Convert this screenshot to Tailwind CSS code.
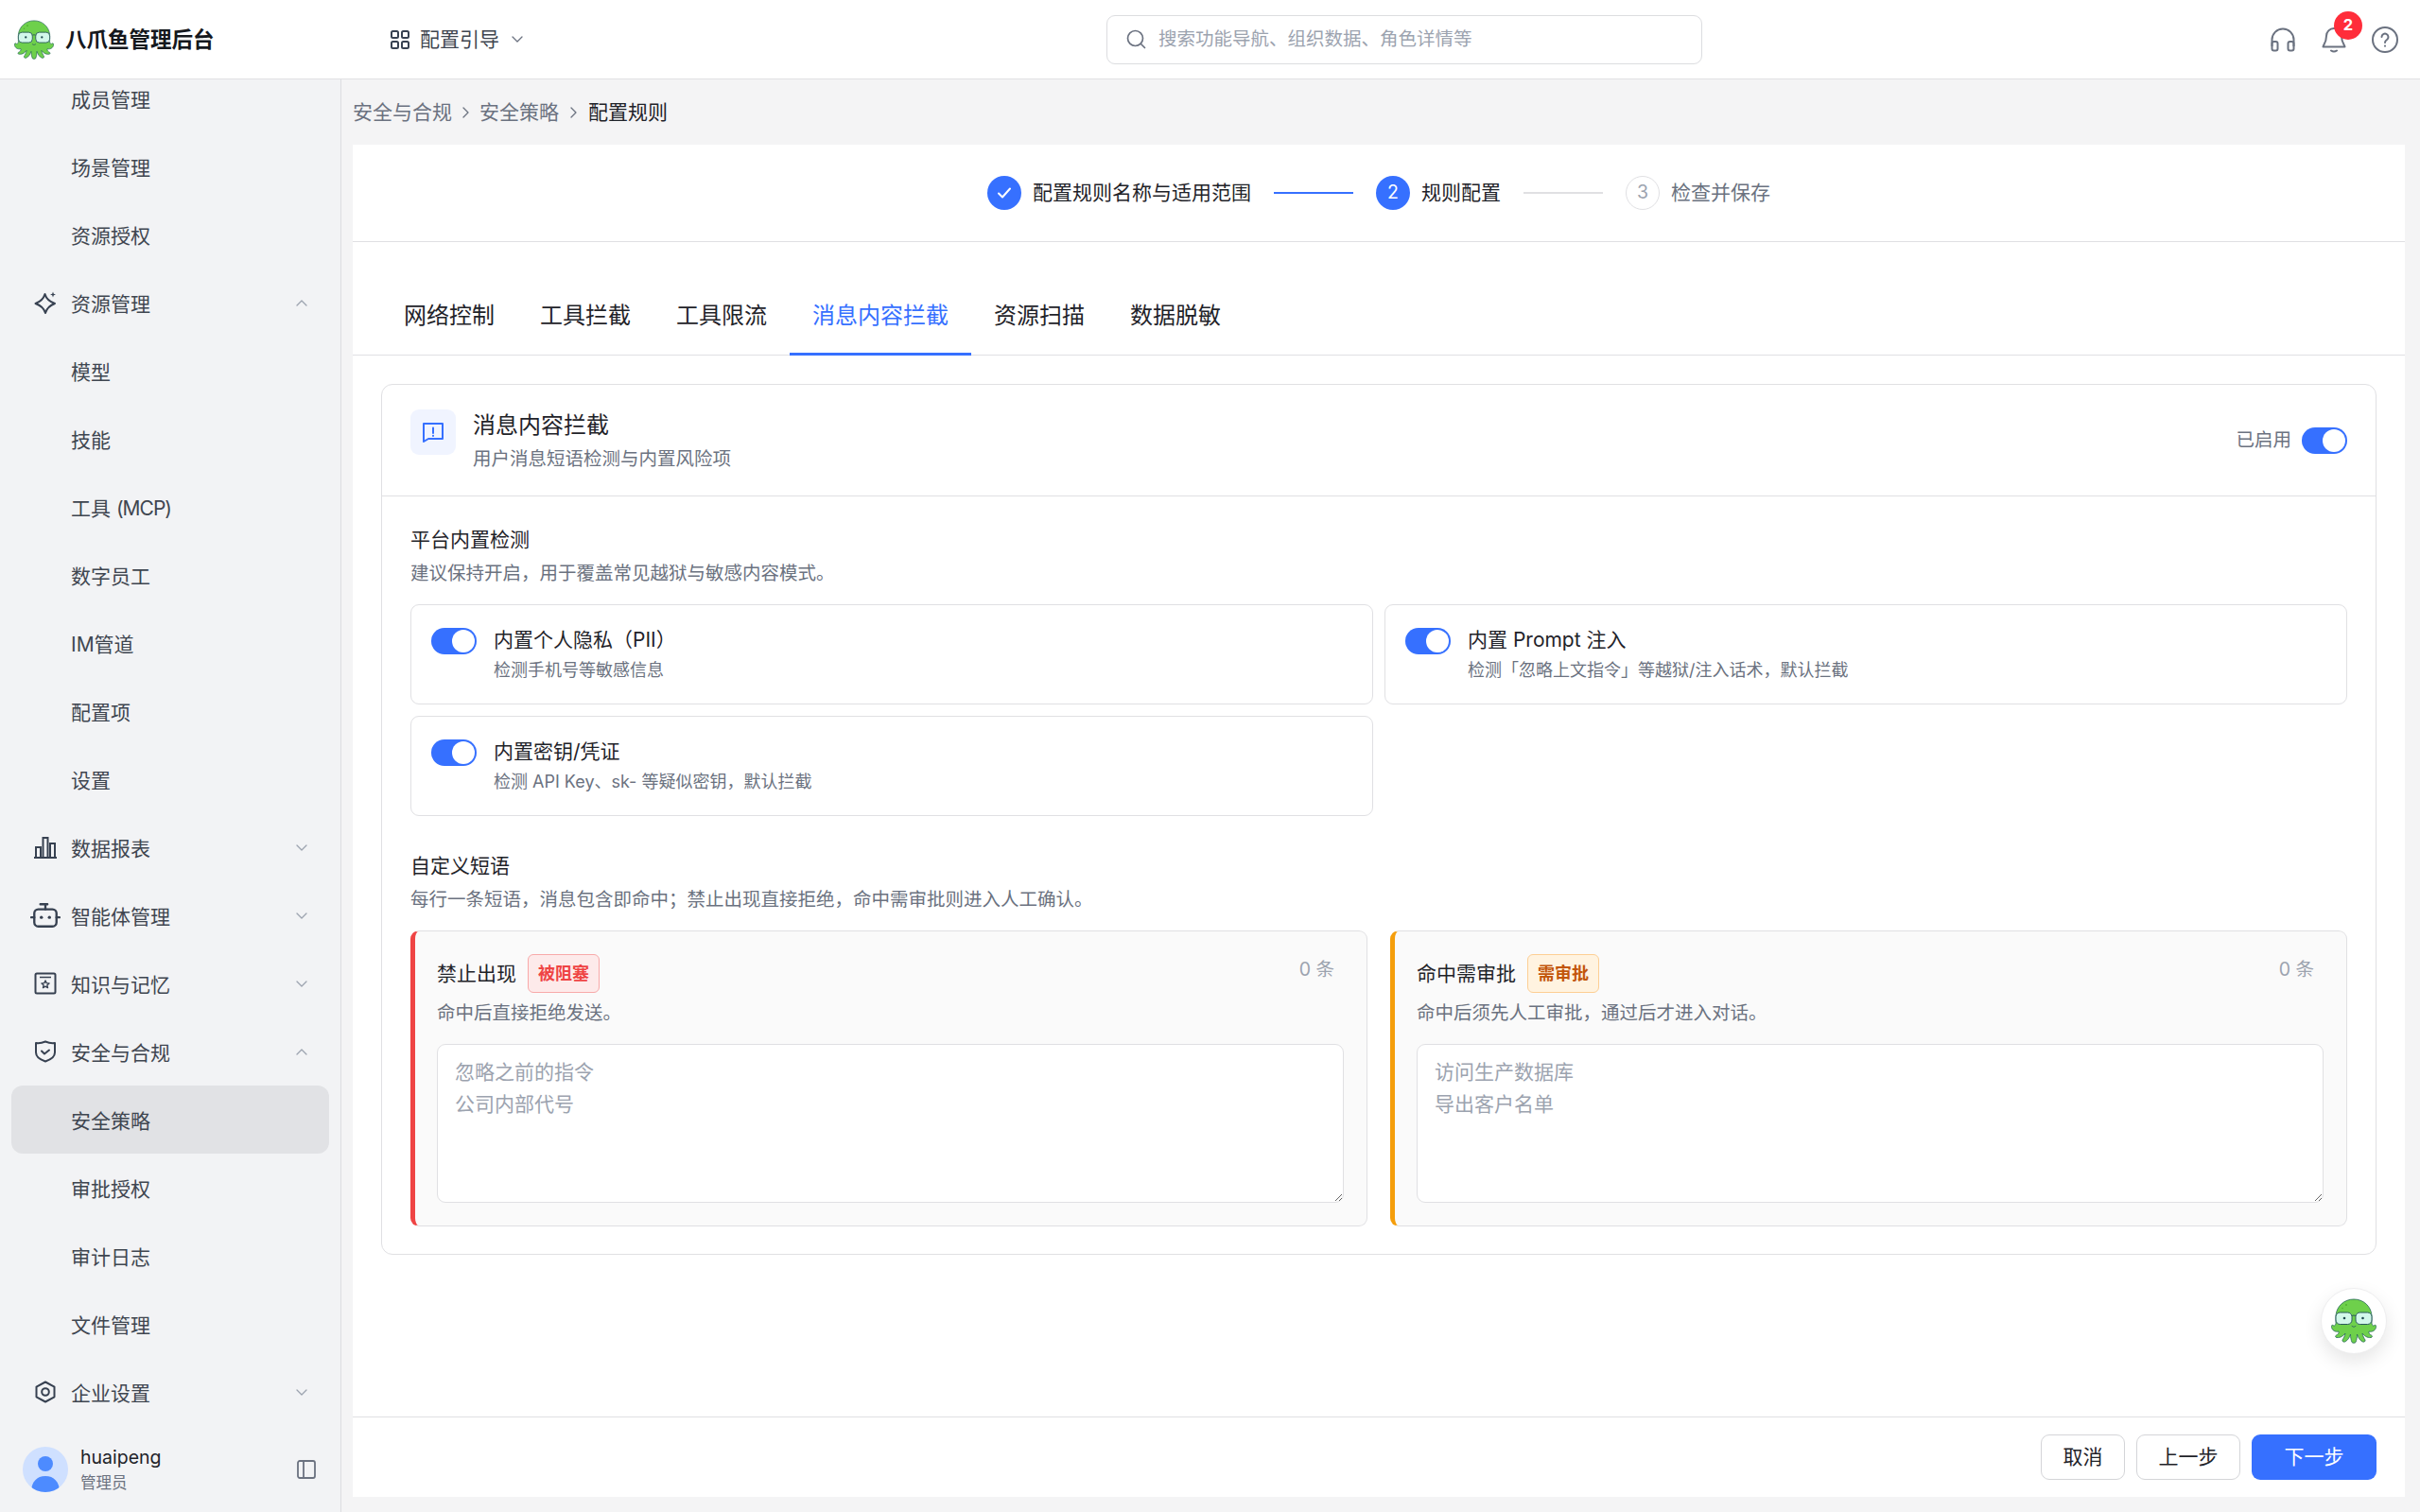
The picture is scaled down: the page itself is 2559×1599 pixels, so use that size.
<!DOCTYPE html>
<html lang="zh-CN">
<head>
    <meta charset="UTF-8">
    <title>八爪鱼管理后台</title>
    <script src="https://cdn.jsdelivr.net/npm/@tailwindcss/browser@4"></script>
</head>
<body class="h-screen overflow-hidden flex flex-col bg-[#f4f4f5] text-[#1f2329] text-[21px] font-['Inter','Noto_Sans_CJK_SC',sans-serif]">

    <!-- shared octopus logo -->
    <svg class="hidden">
        <symbol id="octopus" viewBox="0 0 48 48">
            <path d="M24 1C34 1 42 8 43 18L43 27C43.500 29 45 29.500 46 28.500C47.200 27.800 47.800 29 47.500 30.500C47 34 43.500 36 40 35C39.500 37 41 38.500 42.500 39C44 39.800 43.500 41.500 42 41.500C38 42 35 39.500 33 37C33.500 40 35 42.500 36 44C36.500 45.500 35 46.500 33.500 46C30 44.500 28.500 41 27.500 38C27.500 41 27 44 26 46.500C25.200 47.500 22.800 47.500 22 46.500C21 44 20.500 41 20.500 38C19.500 41 18 44.500 14.500 46C13 46.500 11.500 45.500 12 44C13 42.500 14.500 40 15 37C13 39.500 10 42 6 41.500C4.500 41.500 4 39.800 5.500 39C7 38.500 8.500 37 8 35C4.500 36 1 34 .5 30.500C.2 29 .8 27.800 2 28.500C3 29.500 4.500 29 5 27L5 18C6 8 14 1 24 1Z" fill="#6ed04b" stroke="#2a6a5a" stroke-width=".8" stroke-linejoin="round"/>
            <rect x="5" y="15" width="17" height="12.500" rx="4.500" fill="#d2f8ea" stroke="#2a5a5c" stroke-width="1"/>
            <rect x="26" y="15" width="17" height="12.500" rx="4.500" fill="#d2f8ea" stroke="#2a5a5c" stroke-width="1"/>
            <path d="M22 18.500Q24 17.500 26 18.500" fill="none" stroke="#2a5a5c" stroke-width="1"/>
            <circle cx="14" cy="21" r="1.300" fill="#1f4a4f"/>
            <circle cx="33.500" cy="21" r="1.300" fill="#1f4a4f"/>
            <path d="M22 29.500Q24 31.500 26 29.500" fill="none" stroke="#2a5a5c" stroke-width=".8" stroke-linecap="round"/>
            <circle cx="16" cy="7" r="1" fill="#4fb02f"/>
            <circle cx="12" cy="10.500" r=".8" fill="#4fb02f"/>
        </symbol>
        <symbol id="chev-down" viewBox="0 0 12 7"><path d="M1 1l5 5 5-5" fill="none" stroke="currentColor" stroke-width="1.300" stroke-linecap="round" stroke-linejoin="round"/></symbol>
        <symbol id="chev-up" viewBox="0 0 12 7"><path d="M1 6l5-5 5 5" fill="none" stroke="currentColor" stroke-width="1.300" stroke-linecap="round" stroke-linejoin="round"/></symbol>
        <symbol id="chev-right" viewBox="0 0 7 12"><path d="M1 1l5 5-5 5" fill="none" stroke="currentColor" stroke-width="1.300" stroke-linecap="round" stroke-linejoin="round"/></symbol>
    </svg>

    <!-- Top bar -->
    <header class="h-[84px] flex-none flex items-center bg-white border-b border-[#e0e0e3]">
        <div class="w-[413px] flex-none flex items-center pl-[15px] gap-3">
            <svg class="w-[42px] h-[42px]"><use href="#octopus"/></svg>
            <span class="text-[22.5px] font-bold text-[#15181d]">八爪鱼管理后台</span>
        </div>
        <div class="w-[757px] flex-none flex items-center text-[#3f4650]">
            <svg class="w-[20px] h-[20px] mr-[11px]" viewBox="0 0 20 20" fill="none" stroke="#374151" stroke-width="2"><rect x="1" y="1" width="7" height="7" rx="1.500"/><rect x="12" y="1" width="7" height="7" rx="1.500"/><rect x="1" y="12" width="7" height="7" rx="1.500"/><rect x="12" y="12" width="7" height="7" rx="1.500"/></svg>
            <span class="leading-[32px]">配置引导</span>
            <svg class="w-[12px] h-[7px] ml-[13px] text-[#6b7280]"><use href="#chev-down"/></svg>
        </div>
        <div class="w-[630px] h-[52px] flex-none flex items-center gap-3 px-[19px] bg-white border border-[#dcdde0] rounded-[9px]">
            <svg class="w-[23px] h-[23px]" viewBox="0 0 23 23" fill="none" stroke="#6b7280" stroke-width="1.700" stroke-linecap="round"><circle cx="10.500" cy="10.500" r="8"/><path d="M16.500 16.500l4 4"/></svg>
            <span class="text-[19.5px] text-[#9ca3af]">搜索功能导航、组织数据、角色详情等</span>
        </div>
        <div class="ml-auto pr-[10px] flex items-center text-[#6b7280]">
            <div class="w-[54px] flex justify-center">
                <svg class="w-[26px] h-[26px]" viewBox="0 0 26 26" fill="none" stroke="currentColor" stroke-width="2" stroke-linejoin="round"><path d="M1.500 20v-7a11.500 11.500 0 0 1 23 0v7"/><rect x="1.500" y="15" width="6" height="9.500" rx="2"/><rect x="18.500" y="15" width="6" height="9.500" rx="2"/></svg>
            </div>
            <div class="relative w-[54px] flex justify-center">
                <svg class="w-[26px] h-[28px]" viewBox="0 0 26 28" fill="none" stroke="currentColor" stroke-width="2" stroke-linecap="round" stroke-linejoin="round"><path d="M13 2a8 8 0 0 0-8 8c0 7-3.500 10-3.500 11.500h23C24.500 20 21 17 21 10a8 8 0 0 0-8-8z"/><path d="M10 25.500q3 2 6 0"/></svg>
                <span class="absolute left-[27px] top-[-16px] w-[30px] h-[30px] rounded-full bg-[#ff2d3a] text-white text-[16.5px] font-bold flex items-center justify-center">2</span>
            </div>
            <div class="w-[54px] flex justify-center">
                <svg class="w-[28px] h-[28px]" viewBox="0 0 28 28" fill="none" stroke="currentColor" stroke-width="2" stroke-linecap="round"><circle cx="14" cy="14" r="13"/><path d="M10.500 11a3.500 3.500 0 1 1 5.500 3c-1.300.9-2 1.600-2 3"/><path d="M14 20.500v.2"/></svg>
            </div>
        </div>
    </header>

    <div class="flex-1 min-h-0 flex">
        <!-- Sidebar -->
        <aside class="w-[361px] flex-none flex flex-col bg-[#f2f3f5] border-r border-[#dcdde0] text-[#3f4650]">
            <nav class="flex-1 min-h-0 overflow-hidden px-3">
                <div class="-mt-[16px]">
                    <div class="h-[72px] flex items-center pl-[63px] pt-[3px]">成员管理</div>
                    <div class="h-[72px] flex items-center pl-[63px] pt-[3px]">场景管理</div>
                    <div class="h-[72px] flex items-center pl-[63px] pt-[3px]">资源授权</div>
                    <div class="h-[72px] flex items-center pl-[24px] pr-[23px] gap-[15px]">
                        <svg class="w-[24px] h-[24px]" viewBox="0 0 24 24" fill="none" stroke="#374151" stroke-width="2" stroke-linejoin="round"><path d="M11.500 3Q13.500 10 22 13Q14 16 12 23Q10 16 1.500 13Q9.500 10 11.500 3Z"/><path d="M20 .5l.8 2.200 2.200.8-2.200.8-.8 2.200-.8-2.200-2.200-.8 2.200-.8z" fill="#374151" stroke="none"/></svg>
                        <span class="flex-1 pt-[3px]">资源管理</span>
                        <svg class="w-[12px] h-[7px] text-[#9ca3af]"><use href="#chev-up"/></svg>
                    </div>
                    <div class="h-[72px] flex items-center pl-[63px] pt-[3px]">模型</div>
                    <div class="h-[72px] flex items-center pl-[63px] pt-[3px]">技能</div>
                    <div class="h-[72px] flex items-center pl-[63px] pt-[3px]"><span>工具 <span class="tracking-[-1px]">(MCP)</span></span></div>
                    <div class="h-[72px] flex items-center pl-[63px] pt-[3px]">数字员工</div>
                    <div class="h-[72px] flex items-center pl-[63px] pt-[3px]">IM管道</div>
                    <div class="h-[72px] flex items-center pl-[63px] pt-[3px]">配置项</div>
                    <div class="h-[72px] flex items-center pl-[63px] pt-[3px]">设置</div>
                    <div class="h-[72px] flex items-center pl-[24px] pr-[23px] gap-[15px]">
                        <svg class="w-[24px] h-[24px]" viewBox="0 0 24 24" fill="none" stroke="#374151" stroke-width="2"><path d="M0 23h24"/><rect x="2" y="12" width="5" height="11"/><rect x="9.500" y="2" width="5" height="21"/><rect x="17" y="8" width="5" height="15"/></svg>
                        <span class="flex-1 pt-[3px]">数据报表</span>
                        <svg class="w-[12px] h-[7px] text-[#9ca3af]"><use href="#chev-down"/></svg>
                    </div>
                    <div class="h-[72px] flex items-center pl-[20px] pr-[23px] gap-[11px]">
                        <svg class="w-[32px] h-[28px]" viewBox="0 0 30 26" fill="none" stroke="#374151" stroke-width="2.200" stroke-linecap="round"><rect x="4" y="7" width="22" height="17" rx="4"/><path d="M15 7V2M10 2h7M1 15h3M26 15h3"/><circle cx="11" cy="15" r="1.600" fill="#374151" stroke="none"/><circle cx="19" cy="15" r="1.600" fill="#374151" stroke="none"/></svg>
                        <span class="flex-1 pt-[3px]">智能体管理</span>
                        <svg class="w-[12px] h-[7px] text-[#9ca3af]"><use href="#chev-down"/></svg>
                    </div>
                    <div class="h-[72px] flex items-center pl-[24px] pr-[23px] gap-[15px]">
                        <svg class="w-[24px] h-[24px]" viewBox="0 0 24 24" fill="none" stroke="#374151" stroke-width="2" stroke-linejoin="round"><rect x="1.500" y="1.500" width="21" height="21" rx="1.500"/><path d="M6 5.500h12" stroke-width="1.500"/><path d="M12 9l1.200 2.600 2.800.3-2.100 1.900.6 2.800-2.500-1.400-2.500 1.400.6-2.800-2.100-1.900 2.800-.3z" stroke-width="1.400"/></svg>
                        <span class="flex-1 pt-[3px]">知识与记忆</span>
                        <svg class="w-[12px] h-[7px] text-[#9ca3af]"><use href="#chev-down"/></svg>
                    </div>
                    <div class="h-[72px] flex items-center pl-[24px] pr-[23px] gap-[15px]">
                        <svg class="w-[24px] h-[24px]" viewBox="0 0 24 24" fill="none" stroke="#374151" stroke-width="2" stroke-linecap="round" stroke-linejoin="round"><path d="M2 3q5 .6 10-1.500 5 2.100 10 1.500v10c0 4.500-4 7.500-10 9.500-6-2-10-5-10-9.500z"/><path d="M8 11.500l3 3 5-4"/></svg>
                        <span class="flex-1 pt-[3px]">安全与合规</span>
                        <svg class="w-[12px] h-[7px] text-[#9ca3af]"><use href="#chev-up"/></svg>
                    </div>
                    <div class="h-[72px] flex items-center pl-[63px] pt-[3px] bg-[#e1e2e5] rounded-[12px]">安全策略</div>
                    <div class="h-[72px] flex items-center pl-[63px] pt-[3px]">审批授权</div>
                    <div class="h-[72px] flex items-center pl-[63px] pt-[3px]">审计日志</div>
                    <div class="h-[72px] flex items-center pl-[63px] pt-[3px]">文件管理</div>
                    <div class="h-[72px] flex items-center pl-[24px] pr-[23px] gap-[15px]">
                        <svg class="w-[24px] h-[24px]" viewBox="0 0 24 24" fill="none" stroke="#374151" stroke-width="2" stroke-linejoin="round"><path d="M12 1.500l9.500 5.200v10.600L12 22.500l-9.500-5.200V6.700z"/><circle cx="12" cy="12" r="3.800"/></svg>
                        <span class="flex-1 pt-[3px]">企业设置</span>
                        <svg class="w-[12px] h-[7px] text-[#9ca3af]"><use href="#chev-down"/></svg>
                    </div>
                </div>
            </nav>
            <div class="h-[90px] flex-none flex items-center pl-6 pr-[26px]">
                <div class="w-[48px] h-[48px] rounded-full bg-[#cfe0ff] overflow-hidden flex-none">
                    <svg class="w-[48px] h-[48px]" viewBox="0 0 48 48" fill="#4d8bff"><circle cx="24" cy="18" r="8"/><path d="M9 48c0-11 6-17 15-17s15 6 15 17z"/></svg>
                </div>
                <div class="ml-[13px] flex-1">
                    <div class="text-[19.5px] leading-[26px] text-[#1f2329]">huaipeng</div>
                    <div class="mt-[2px] text-[16.5px] leading-[24px] text-[#6b7280]">管理员</div>
                </div>
                <svg class="w-[20px] h-[20px]" viewBox="0 0 20 20" fill="none" stroke="#6b7280" stroke-width="1.800"><rect x="1" y="1" width="18" height="18" rx="2"/><path d="M7 1v18"/></svg>
            </div>
        </aside>

        <main class="flex-1 min-w-0 flex flex-col pl-3 pr-4 pb-4">
            <!-- Breadcrumb -->
            <div class="h-[69px] flex-none flex items-center text-[#6b7280]">
                <span>安全与合规</span>
                <svg class="w-[7px] h-[12px] mx-[11px] text-[#6b7280]"><use href="#chev-right"/></svg>
                <span>安全策略</span>
                <svg class="w-[7px] h-[12px] mx-[12px] text-[#6b7280]"><use href="#chev-right"/></svg>
                <span class="text-[#1f2329]">配置规则</span>
            </div>

            <div class="relative flex-1 min-h-0 flex flex-col bg-white">
                <!-- Steps -->
                <div class="h-[103px] flex-none flex items-center justify-center border-b border-[#e0e0e3]">
                    <span class="w-[36px] h-[36px] rounded-full bg-[#3670ff] flex items-center justify-center">
                        <svg class="w-[18px] h-[18px]" viewBox="0 0 18 18" fill="none" stroke="#fff" stroke-width="2" stroke-linecap="round" stroke-linejoin="round"><path d="M3 9.500l4 4 8-9"/></svg>
                    </span>
                    <span class="ml-3">配置规则名称与适用范围</span>
                    <span class="w-[84px] h-[2px] mx-6 bg-[#3670ff]"></span>
                    <span class="w-[36px] h-[36px] rounded-full bg-[#3670ff] text-white text-[19.5px] flex items-center justify-center">2</span>
                    <span class="ml-3">规则配置</span>
                    <span class="w-[84px] h-[2px] mx-6 bg-[#e0e0e3]"></span>
                    <span class="w-[36px] h-[36px] rounded-full border border-[#e0e0e3] text-[#9ca3af] text-[19.5px] flex items-center justify-center">3</span>
                    <span class="ml-3 text-[#6b7280]">检查并保存</span>
                </div>

                <!-- Tabs -->
                <div class="flex-none flex pl-[30px] pt-[60px] border-b border-[#e0e0e3] text-[24px] leading-[36px]">
                    <div class="px-6 pb-[21px] -mb-px border-b-[3px] border-transparent">网络控制</div>
                    <div class="px-6 pb-[21px] -mb-px border-b-[3px] border-transparent">工具拦截</div>
                    <div class="px-6 pb-[21px] -mb-px border-b-[3px] border-transparent">工具限流</div>
                    <div class="px-6 pb-[21px] -mb-px border-b-[3px] border-[#3670ff] text-[#3670ff]">消息内容拦截</div>
                    <div class="px-6 pb-[21px] -mb-px border-b-[3px] border-transparent">资源扫描</div>
                    <div class="px-6 pb-[21px] -mb-px border-b-[3px] border-transparent">数据脱敏</div>
                </div>

                <div class="flex-1 min-h-0 overflow-hidden p-[30px]">
                    <section class="border border-[#e0e0e3] rounded-[12px]">
                        <div class="h-[118px] flex items-center justify-between pl-[30px] pr-[30px] border-b border-[#e0e0e3]">
                            <div class="flex items-start gap-[18px]">
                                <div class="w-[48px] h-[48px] mt-px rounded-[9px] bg-[#f0f4ff] flex items-center justify-center">
                                    <svg class="w-[24px] h-[24px]" viewBox="0 0 24 24" fill="none" stroke="#3670ff" stroke-width="2" stroke-linecap="round" stroke-linejoin="round"><path d="M2 3h20v16H7l-5 3z"/><path d="M12 7.500v5.500M12 15.800v.2"/></svg>
                                </div>
                                <div>
                                    <div class="text-[24px] leading-[36px]">消息内容拦截</div>
                                    <div class="mt-[3px] text-[19.5px] leading-[29px] text-[#6b7280]">用户消息短语检测与内置风险项</div>
                                </div>
                            </div>
                            <div class="flex items-center gap-[11px]">
                                <span class="text-[19.5px] text-[#6b7280]">已启用</span>
                                <span class="w-[48px] h-[28px] rounded-full bg-[#3670ff] flex items-center justify-end pr-[2px]"><span class="w-[24px] h-[24px] rounded-full bg-white"></span></span>
                            </div>
                        </div>

                        <div class="pt-[30px] px-[30px] pb-[29px]">
                            <div class="leading-[32px]">平台内置检测</div>
                            <div class="mt-1 text-[19.5px] leading-[30px] text-[#6b7280]">建议保持开启，用于覆盖常见越狱与敏感内容模式。</div>

                            <div class="mt-[18px] grid grid-cols-2 gap-3">
                                <div class="h-[106px] flex gap-[18px] pl-[21px] pt-[21px] border border-[#e0e0e3] rounded-[9px]">
                                    <span class="w-[48px] h-[28px] mt-[3px] rounded-full bg-[#3670ff] flex items-center justify-end pr-[2px]"><span class="w-[24px] h-[24px] rounded-full bg-white"></span></span>
                                    <div>
                                        <div class="leading-[32px]">内置个人隐私（PII）</div>
                                        <div class="mt-[2px] text-[18px] leading-[27px] text-[#6b7280]">检测手机号等敏感信息</div>
                                    </div>
                                </div>
                                <div class="h-[106px] flex gap-[18px] pl-[21px] pt-[21px] border border-[#e0e0e3] rounded-[9px]">
                                    <span class="w-[48px] h-[28px] mt-[3px] rounded-full bg-[#3670ff] flex items-center justify-end pr-[2px]"><span class="w-[24px] h-[24px] rounded-full bg-white"></span></span>
                                    <div>
                                        <div class="leading-[32px]">内置 Prompt 注入</div>
                                        <div class="mt-[2px] text-[18px] leading-[27px] text-[#6b7280]">检测「忽略上文指令」等越狱/注入话术，默认拦截</div>
                                    </div>
                                </div>
                                <div class="h-[106px] flex gap-[18px] pl-[21px] pt-[21px] border border-[#e0e0e3] rounded-[9px]">
                                    <span class="w-[48px] h-[28px] mt-[3px] rounded-full bg-[#3670ff] flex items-center justify-end pr-[2px]"><span class="w-[24px] h-[24px] rounded-full bg-white"></span></span>
                                    <div>
                                        <div class="leading-[32px]">内置密钥/凭证</div>
                                        <div class="mt-[2px] text-[18px] leading-[27px] text-[#6b7280]">检测 API Key、sk- 等疑似密钥，默认拦截</div>
                                    </div>
                                </div>
                            </div>

                            <div class="mt-[37px] leading-[32px]">自定义短语</div>
                            <div class="mt-1 text-[19.5px] leading-[30px] text-[#6b7280]">每行一条短语，消息包含即命中；禁止出现直接拒绝，命中需审批则进入人工确认。</div>

                            <div class="mt-[18px] grid grid-cols-2 gap-6">
                                <div class="pl-[23px] pr-6 pt-6 pb-6 bg-[#fafafa] border border-[#e0e0e3] border-l-[5px] border-l-[#ef4444] rounded-[9px]">
                                    <div class="flex items-start justify-between">
                                        <div class="flex items-center gap-3">
                                            <span>禁止出现</span>
                                            <span class="h-[41px] px-[10px] flex items-center rounded-[6px] bg-[#fdeaea] border border-[#f8a9a9] text-[18px] font-bold text-[#ef4444]">被阻塞</span>
                                        </div>
                                        <span class="pr-[10px] text-[19.5px] leading-[32px] text-[#9ca3af]">0 条</span>
                                    </div>
                                    <div class="mt-[6px] text-[19.5px] leading-[30px] text-[#6b7280]">命中后直接拒绝发送。</div>
                                    <textarea class="mt-[18px] block w-full h-[168px] px-[18px] py-[12px] bg-white border border-[#e0e0e3] rounded-[9px] outline-none text-[21px] leading-[34px] placeholder:text-[#9ca3af]" placeholder="忽略之前的指令&#10;公司内部代号"></textarea>
                                </div>
                                <div class="pl-[23px] pr-6 pt-6 pb-6 bg-[#fafafa] border border-[#e0e0e3] border-l-[5px] border-l-[#f59e0b] rounded-[9px]">
                                    <div class="flex items-start justify-between">
                                        <div class="flex items-center gap-3">
                                            <span>命中需审批</span>
                                            <span class="h-[41px] px-[10px] flex items-center rounded-[6px] bg-[#fff3e0] border border-[#fdcf94] text-[18px] font-bold text-[#c2560a]">需审批</span>
                                        </div>
                                        <span class="pr-[10px] text-[19.5px] leading-[32px] text-[#9ca3af]">0 条</span>
                                    </div>
                                    <div class="mt-[6px] text-[19.5px] leading-[30px] text-[#6b7280]">命中后须先人工审批，通过后才进入对话。</div>
                                    <textarea class="mt-[18px] block w-full h-[168px] px-[18px] py-[12px] bg-white border border-[#e0e0e3] rounded-[9px] outline-none text-[21px] leading-[34px] placeholder:text-[#9ca3af]" placeholder="访问生产数据库&#10;导出客户名单"></textarea>
                                </div>
                            </div>
                        </div>
                    </section>
                </div>

                <!-- Footer buttons -->
                <div class="h-[85px] flex-none flex items-center justify-end gap-3 pr-[30px] border-t border-[#e0e0e3]">
                    <button class="w-[89px] h-[48px] bg-white border border-[#d4d5d8] rounded-[9px]">取消</button>
                    <button class="w-[110px] h-[48px] bg-white border border-[#d4d5d8] rounded-[9px]">上一步</button>
                    <button class="w-[132px] h-[48px] bg-[#3670ff] text-white rounded-[9px]">下一步</button>
                </div>

                <!-- Floating assistant -->
                <div class="absolute right-[19px] bottom-[151px] w-[70px] h-[70px] rounded-full bg-white border border-[#eeeeef] shadow-[0_8px_20px_rgba(0,0,0,0.1)] flex items-center justify-center">
                    <svg class="w-[48px] h-[48px]"><use href="#octopus"/></svg>
                </div>
            </div>
        </main>
    </div>

</body>
</html>
